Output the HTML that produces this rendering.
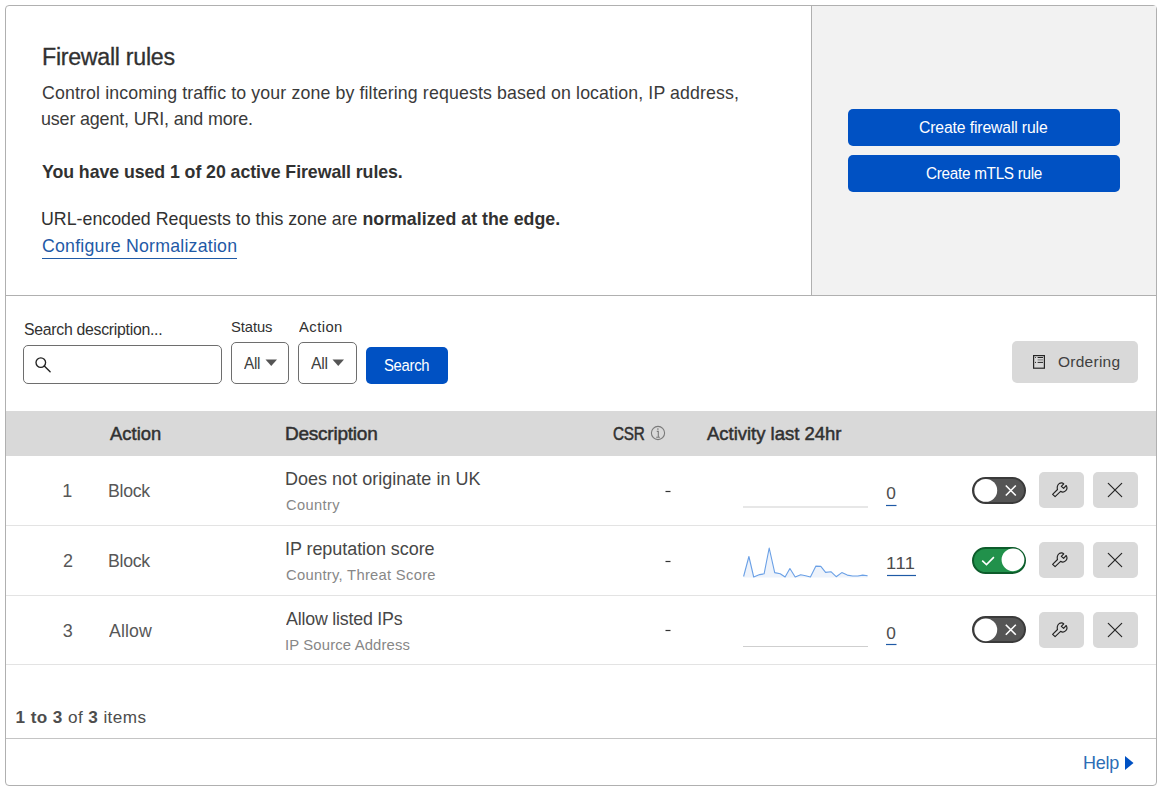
<!DOCTYPE html>
<html><head><meta charset="utf-8"><title>Firewall rules</title>
<style>
html,body{margin:0;padding:0;background:#fff;width:1161px;height:791px;overflow:hidden;position:relative;font-family:"Liberation Sans",sans-serif;}
.t{position:absolute;white-space:pre;transform-origin:0 0;font-family:"Liberation Sans",sans-serif;}
.t b{font-weight:700;}
.abs{position:absolute;box-sizing:border-box;}
.card{left:5px;top:5px;width:1152px;height:781px;border:1px solid #b0b0b0;border-radius:4px;}
.panel{left:812px;top:6px;width:344px;height:289px;background:#f2f2f2;}
.vline{left:811px;top:6px;width:1px;height:289px;background:#b0b0b0;}
.hline{left:6px;top:295px;width:1150px;height:1px;background:#b0b0b0;}
.btn{background:#0051c3;border-radius:5px;}
.input{border:1px solid #6e6e6e;border-radius:5px;background:#fff;}
.gbtn{background:#d9d9d9;border-radius:5px;}
.thead{left:6px;top:411px;width:1150px;height:45px;background:#d9d9d9;}
.rline{left:6px;width:1150px;height:1px;background:#e3e3e3;}
.toggle{border-radius:14px;}
svg{position:absolute;overflow:visible;}
</style></head><body>
<div class="abs card"></div>
<div class="abs panel"></div>
<div class="abs vline"></div>
<div class="abs hline"></div>
<div class="abs btn" style="left:848px;top:109px;width:272px;height:37px;"></div>
<div class="abs btn" style="left:848px;top:155px;width:272px;height:37px;"></div>

<div class="abs input" style="left:23px;top:345px;width:199px;height:39px;"></div>
<svg width="1161" height="791" style="left:0;top:0;">
 <circle cx="40.8" cy="362.6" r="4.8" fill="none" stroke="#222" stroke-width="1.35"/>
 <line x1="44.3" y1="366.1" x2="50.1" y2="371.7" stroke="#222" stroke-width="1.4" stroke-linecap="round"/>
</svg>
<div class="abs input" style="left:231px;top:342px;width:58px;height:42px;"></div>
<div class="abs input" style="left:298px;top:342px;width:59px;height:42px;"></div>
<svg width="1161" height="791" style="left:0;top:0;">
 <polygon points="265.5,359.5 277,359.5 271.25,366" fill="#555"/>
 <polygon points="332.5,359.5 344,359.5 338.25,366" fill="#555"/>
</svg>
<div class="abs btn" style="left:366px;top:347px;width:82px;height:37px;"></div>
<div class="abs gbtn" style="left:1012px;top:341px;width:126px;height:42px;"></div>
<svg width="1161" height="791" style="left:0;top:0;">
 <rect x="1033.6" y="355.6" width="10.8" height="12.6" fill="none" stroke="#262626" stroke-width="1.2"/>
 <path d="M1037.6,357.5 H1043 M1037.6,362.4 H1043" stroke="#262626" stroke-width="1"/>
 <path d="M1037.6,359.9 H1043" stroke="#777" stroke-width="1"/>
 <circle cx="1035.5" cy="357.5" r="0.55" fill="#333"/><circle cx="1035.5" cy="362.4" r="0.55" fill="#333"/>
</svg>

<div class="abs thead"></div>
<svg width="1161" height="791" style="left:0;top:0;">
 <circle cx="658" cy="433" r="6.6" fill="none" stroke="#7a7a7a" stroke-width="1.1"/>
 <path d="M656.8,431.4 H658.3 V437.2 M656.2,437.3 H659.9" fill="none" stroke="#7a7a7a" stroke-width="1.1"/>
 <circle cx="657.9" cy="429.1" r="0.8" fill="#7a7a7a"/>
</svg>
<div class="abs rline" style="top:525px;"></div>
<div class="abs rline" style="top:595px;"></div>
<div class="abs rline" style="top:664px;"></div>
<div class="abs" style="left:6px;top:738px;width:1150px;height:1px;background:#c4c4c4;"></div>

<svg width="1161" height="791" style="left:0;top:0;">
 <!-- dashes -->
 <line x1="665.5" y1="491.5" x2="670.5" y2="491.5" stroke="#333" stroke-width="1.2"/>
 <line x1="665.5" y1="561.5" x2="670.5" y2="561.5" stroke="#333" stroke-width="1.2"/>
 <line x1="665.5" y1="630.5" x2="670.5" y2="630.5" stroke="#333" stroke-width="1.2"/>
 <!-- flat sparklines -->
 <line x1="743" y1="507" x2="868" y2="507" stroke="#cfcfcf" stroke-width="1.2"/>
 <line x1="743" y1="646.5" x2="868" y2="646.5" stroke="#cfcfcf" stroke-width="1.2"/>
 <!-- sparkline -->
 <polygon points="743.6,577.5 743.6,576.5 748.9,556.5 753.7,577.0 759.7,574.6 764.1,573.8 769.2,548.0 774.7,572.6 780.2,573.8 785.1,577.0 789.9,568.5 795.2,577.0 800.7,574.8 805.6,575.8 810.4,577.0 815.9,566.1 820.8,566.4 825.6,572.4 830.9,571.7 836.2,576.7 841.8,572.6 847.3,575.1 852.6,576.0 857.9,576.0 862.7,575.1 867.6,575.8 867.6,577.5" fill="#eef3fb"/>
 <polyline points="743.6,576.5 748.9,556.5 753.7,577.0 759.7,574.6 764.1,573.8 769.2,548.0 774.7,572.6 780.2,573.8 785.1,577.0 789.9,568.5 795.2,577.0 800.7,574.8 805.6,575.8 810.4,577.0 815.9,566.1 820.8,566.4 825.6,572.4 830.9,571.7 836.2,576.7 841.8,572.6 847.3,575.1 852.6,576.0 857.9,576.0 862.7,575.1 867.6,575.8" fill="none" stroke="#6aa0e6" stroke-width="1.1" stroke-linejoin="round"/>
 <!-- underlines -->
 <line x1="886" y1="505.5" x2="896.5" y2="505.5" stroke="#1f5aa6" stroke-width="1.2"/>
 <line x1="887" y1="575.5" x2="916" y2="575.5" stroke="#1f5aa6" stroke-width="1.2"/>
 <line x1="886" y1="644.5" x2="896.5" y2="644.5" stroke="#1f5aa6" stroke-width="1.2"/>
 <!-- link underline -->
 <line x1="42" y1="258.5" x2="237" y2="258.5" stroke="#1f5aa6" stroke-width="1"/>
 <!-- help triangle -->
 <polygon points="1125,756 1125,770 1133.5,763" fill="#0051c3"/>
</svg>

<!-- row controls -->
<div class="abs toggle" style="left:972px;top:477px;width:54px;height:27px;background:#555;border:2px solid #3a3a3a;"></div>
<div class="abs toggle" style="left:972px;top:547px;width:54px;height:27px;background:#21914b;border:2px solid #0d5c2b;"></div>
<div class="abs toggle" style="left:972px;top:616px;width:54px;height:27px;background:#555;border:2px solid #3a3a3a;"></div>
<svg width="1161" height="791" style="left:0;top:0;">
 <circle cx="985.8" cy="490.4" r="11.4" fill="#fff"/>
 <circle cx="1013" cy="559.8" r="11.4" fill="#fff"/>
 <circle cx="985.8" cy="629.8" r="11.4" fill="#fff"/>
 <path d="M1005.8,485.5 L1015.8,495.5 M1015.8,485.5 L1005.8,495.5" stroke="#fff" stroke-width="1.6"/>
 <path d="M1005.8,624.8 L1015.8,634.8 M1015.8,624.8 L1005.8,634.8" stroke="#fff" stroke-width="1.6"/>
 <path d="M982.2,560.6 L986.5,564.6 L993.9,557.1" fill="none" stroke="#fff" stroke-width="1.6"/>
</svg>
<div class="abs gbtn" style="left:1039px;top:472px;width:45px;height:36px;"></div>
<div class="abs gbtn" style="left:1093px;top:472px;width:45px;height:36px;"></div>
<div class="abs gbtn" style="left:1039px;top:542px;width:45px;height:36px;"></div>
<div class="abs gbtn" style="left:1093px;top:542px;width:45px;height:36px;"></div>
<div class="abs gbtn" style="left:1039px;top:612px;width:45px;height:36px;"></div>
<div class="abs gbtn" style="left:1093px;top:612px;width:45px;height:36px;"></div>
<svg width="1161" height="791" style="left:0;top:0;">
 <g transform="translate(0,0)"><path d="M1052.6,494.3 L1057.5,489.5 C1056.8,487.8 1057.3,484.9 1059.2,483.6 C1060.6,482.7 1062.5,482.6 1063.8,483.8 L1061.3,486.4 L1063.6,488.3 L1066.2,485.5 C1067.3,487.3 1067,489.6 1065.5,490.9 C1064,492.3 1062,492.3 1060.6,491.3 L1055.1,496.6 Z" fill="none" stroke="#222" stroke-width="1.15" stroke-linejoin="round"/><path d="M1108.3,483.3 L1121.7,496.7 M1121.7,483.3 L1108.3,496.7" stroke="#262626" stroke-width="1.2" stroke-linecap="round"/></g>
 <g transform="translate(0,70)"><path d="M1052.6,494.3 L1057.5,489.5 C1056.8,487.8 1057.3,484.9 1059.2,483.6 C1060.6,482.7 1062.5,482.6 1063.8,483.8 L1061.3,486.4 L1063.6,488.3 L1066.2,485.5 C1067.3,487.3 1067,489.6 1065.5,490.9 C1064,492.3 1062,492.3 1060.6,491.3 L1055.1,496.6 Z" fill="none" stroke="#222" stroke-width="1.15" stroke-linejoin="round"/><path d="M1108.3,483.3 L1121.7,496.7 M1121.7,483.3 L1108.3,496.7" stroke="#262626" stroke-width="1.2" stroke-linecap="round"/></g>
 <g transform="translate(0,140)"><path d="M1052.6,494.3 L1057.5,489.5 C1056.8,487.8 1057.3,484.9 1059.2,483.6 C1060.6,482.7 1062.5,482.6 1063.8,483.8 L1061.3,486.4 L1063.6,488.3 L1066.2,485.5 C1067.3,487.3 1067,489.6 1065.5,490.9 C1064,492.3 1062,492.3 1060.6,491.3 L1055.1,496.6 Z" fill="none" stroke="#222" stroke-width="1.15" stroke-linejoin="round"/><path d="M1108.3,483.3 L1121.7,496.7 M1121.7,483.3 L1108.3,496.7" stroke="#262626" stroke-width="1.2" stroke-linecap="round"/></g>
</svg>
<div class="t" id="title" style="left:41.92px;top:42.70px;font-size:23.00px;line-height:28px;letter-spacing:-0.277px;color:#313131;transform:scaleX(1.0086);-webkit-text-stroke:0.30px #313131;">Firewall rules</div>
<div class="t" id="d1" style="left:42.00px;top:81.61px;font-size:17.71px;line-height:22px;letter-spacing:0.127px;color:#3a3a3a;transform:scaleX(1.0030);">Control incoming traffic to your zone by filtering requests based on location, IP address,</div>
<div class="t" id="d2" style="left:41.30px;top:108.31px;font-size:17.71px;line-height:22px;letter-spacing:-0.160px;color:#3a3a3a;transform:scaleX(1.0128);">user agent, URI, and more.</div>
<div class="t" id="used" style="left:42.00px;top:161.41px;font-size:17.71px;line-height:22px;letter-spacing:-0.070px;color:#313131;transform:scaleX(1.0039);"><b>You have used 1 of 20 active Firewall rules.</b></div>
<div class="t" id="url" style="left:41.30px;top:208.00px;font-size:17.71px;line-height:22px;letter-spacing:0.005px;color:#313131;transform:scaleX(1.0052);">URL-encoded Requests to this zone are <b>normalized at the edge.</b></div>
<div class="t" id="link" style="left:42.00px;top:235.00px;font-size:17.71px;line-height:22px;letter-spacing:0.214px;color:#1f5aa6;transform:scaleX(1.0029);">Configure Normalization</div>
<div class="t" id="b1" style="left:919.18px;top:117.70px;font-size:15.71px;line-height:19px;letter-spacing:-0.137px;color:#ffffff;transform:scaleX(1.0033);">Create firewall rule</div>
<div class="t" id="b2" style="left:925.88px;top:163.61px;font-size:15.71px;line-height:19px;letter-spacing:-0.300px;color:#ffffff;transform:scaleX(0.9744);">Create mTLS rule</div>
<div class="t" id="lsearch" style="left:24.06px;top:319.00px;font-size:16.29px;line-height:20px;letter-spacing:-0.300px;color:#313131;transform:scaleX(0.9728);">Search description...</div>
<div class="t" id="lstatus" style="left:231.12px;top:317.70px;font-size:14.71px;line-height:18px;letter-spacing:-0.080px;color:#313131;transform:scaleX(1.0036);">Status</div>
<div class="t" id="laction" style="left:299.06px;top:317.70px;font-size:14.71px;line-height:18px;letter-spacing:0.440px;color:#313131;transform:scaleX(1.0065);">Action</div>
<div class="t" id="all1" style="left:244.43px;top:352.91px;font-size:17.00px;line-height:21px;letter-spacing:-0.300px;color:#404040;transform:scaleX(0.9028);">All</div>
<div class="t" id="all2" style="left:311.26px;top:352.91px;font-size:17.00px;line-height:21px;letter-spacing:-0.300px;color:#404040;transform:scaleX(0.9323);">All</div>
<div class="t" id="search" style="left:383.62px;top:355.00px;font-size:16.29px;line-height:20px;letter-spacing:-0.300px;color:#ffffff;transform:scaleX(0.9106);">Search</div>
<div class="t" id="ordering" style="left:1057.62px;top:351.91px;font-size:15.29px;line-height:19px;letter-spacing:0.257px;color:#404040;transform:scaleX(1.0138);">Ordering</div>
<div class="t" id="hact" style="left:109.58px;top:422.00px;font-size:18.71px;line-height:23px;letter-spacing:0.040px;color:#313131;transform:scaleX(0.9842);-webkit-text-stroke:0.50px #313131;">Action</div>
<div class="t" id="hdesc" style="left:285.36px;top:421.91px;font-size:18.71px;line-height:23px;letter-spacing:-0.230px;color:#313131;transform:scaleX(1.0171);-webkit-text-stroke:0.50px #313131;">Description</div>
<div class="t" id="hcsr" style="left:612.88px;top:421.91px;font-size:18.71px;line-height:23px;letter-spacing:-0.300px;color:#313131;transform:scaleX(0.8183);-webkit-text-stroke:0.50px #313131;">CSR</div>
<div class="t" id="hact24" style="left:707.14px;top:421.91px;font-size:18.71px;line-height:23px;letter-spacing:-0.018px;color:#313131;transform:scaleX(0.9898);-webkit-text-stroke:0.50px #313131;">Activity last 24hr</div>
<div class="t" id="n0" style="left:62.34px;top:479.91px;font-size:18.00px;line-height:22px;letter-spacing:0.000px;color:#575757;">1</div>
<div class="t" id="a0" style="left:108.42px;top:479.91px;font-size:18.00px;line-height:22px;letter-spacing:-0.300px;color:#575757;transform:scaleX(0.9840);">Block</div>
<div class="t" id="desc0" style="left:284.54px;top:468.20px;font-size:17.86px;line-height:22px;letter-spacing:0.026px;color:#474747;transform:scaleX(1.0065);">Does not originate in UK</div>
<div class="t" id="sub0" style="left:285.94px;top:495.91px;font-size:14.71px;line-height:18px;letter-spacing:0.383px;color:#878787;transform:scaleX(0.9948);">Country</div>
<div class="t" id="n1" style="left:62.88px;top:549.91px;font-size:18.00px;line-height:22px;letter-spacing:0.000px;color:#575757;">2</div>
<div class="t" id="a1" style="left:108.42px;top:549.91px;font-size:18.00px;line-height:22px;letter-spacing:-0.300px;color:#575757;transform:scaleX(0.9840);">Block</div>
<div class="t" id="desc1" style="left:284.54px;top:538.20px;font-size:17.86px;line-height:22px;letter-spacing:-0.056px;color:#474747;transform:scaleX(1.0067);">IP reputation score</div>
<div class="t" id="sub1" style="left:285.94px;top:565.91px;font-size:14.71px;line-height:18px;letter-spacing:0.280px;color:#878787;transform:scaleX(1.0047);">Country, Threat Score</div>
<div class="t" id="n2" style="left:62.72px;top:619.91px;font-size:18.00px;line-height:22px;letter-spacing:0.000px;color:#575757;">3</div>
<div class="t" id="a2" style="left:108.56px;top:619.91px;font-size:18.00px;line-height:22px;letter-spacing:0.100px;color:#575757;transform:scaleX(0.9842);">Allow</div>
<div class="t" id="desc2" style="left:285.94px;top:608.20px;font-size:17.86px;line-height:22px;letter-spacing:-0.200px;color:#474747;transform:scaleX(0.9964);">Allow listed IPs</div>
<div class="t" id="sub2" style="left:284.54px;top:635.91px;font-size:14.71px;line-height:18px;letter-spacing:0.144px;color:#878787;transform:scaleX(1.0091);">IP Source Address</div>
<div class="t" id="foot" style="left:15.56px;top:706.70px;font-size:17.14px;line-height:21px;letter-spacing:0.417px;color:#4d4d4d;"><b>1 to 3</b> of <b>3</b> items</div>
<div class="t" id="help" style="left:1082.86px;top:750.91px;font-size:18.57px;line-height:23px;letter-spacing:-0.300px;color:#2d6db5;transform:scaleX(0.9698);">Help</div>
<div class="t" id="z0" style="left:886.26px;top:482.61px;font-size:17.29px;line-height:21px;letter-spacing:0.000px;color:#4d4d4d;">0</div>
<div class="t" id="z1" style="left:886.48px;top:552.50px;font-size:17.29px;line-height:21px;letter-spacing:0.600px;color:#4d4d4d;transform:scaleX(1.0559);">111</div>
<div class="t" id="z2" style="left:886.26px;top:622.61px;font-size:17.29px;line-height:21px;letter-spacing:0.000px;color:#4d4d4d;">0</div>
</body></html>
